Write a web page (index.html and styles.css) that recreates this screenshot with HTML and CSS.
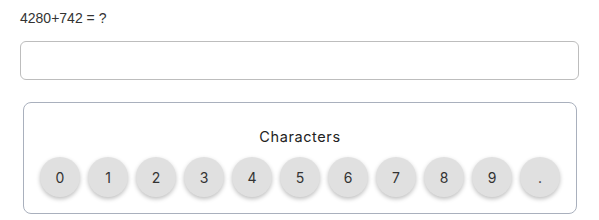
FILE: index.html
```html
<!DOCTYPE html>
<html lang="en">
<head>
    <meta charset="UTF-8">
    <meta name="viewport" content="width=device-width, initial-scale=1.0">
    <title>Calculator Captcha</title>
    <link rel="stylesheet" href="styles.css">
</head>
<body>
    <div class="container">
        <div class="question">4280+742 = ?</div>
        <input class="answer-input" type="text">

        <div class="char-panel">
            <div class="char-title">Characters</div>
            <div class="char-keys">
                <button class="char-key">0</button>
                <button class="char-key">1</button>
                <button class="char-key">2</button>
                <button class="char-key">3</button>
                <button class="char-key">4</button>
                <button class="char-key">5</button>
                <button class="char-key">6</button>
                <button class="char-key">7</button>
                <button class="char-key">8</button>
                <button class="char-key">9</button>
                <button class="char-key">.</button>
            </div>
        </div>
    </div>
</body>
</html>
```

FILE: styles.css
```css
body {
    margin: 0;
    background: #fff;
    font-family: "Liberation Sans", Arial, sans-serif;
}
.container {
    padding: 10px 20px 0 20px;
}
.question {
    font-size: 14px;
    color: #333;
    line-height: 16px;
}
.answer-input {
    display: block;
    box-sizing: border-box;
    width: 559px;
    height: 39px;
    margin-top: 15px;
    border: 1px solid #bdbdbd;
    border-radius: 6px;
    background: #fff;
}
.char-panel {
    box-sizing: border-box;
    width: 554px;
    margin: 22px 0 0 3px;
    padding: 25px 0 16px 0;
    border: 1px solid #a9b0bd;
    border-radius: 8px;
    text-align: center;
}
.char-title {
    font-family: "Inter", sans-serif;
    font-size: 14.5px;
    letter-spacing: 0.6px;
    color: #222;
    line-height: 18px;
}
.char-keys {
    display: flex;
    justify-content: center;
    gap: 8px;
    margin-top: 11px;
}
.char-key {
    width: 40px;
    height: 40px;
    border: none;
    border-radius: 50%;
    background: #e0e0e0;
    color: #333;
    font-family: "Inter", sans-serif;
    font-size: 14px;
    box-shadow: 0 2px 4px rgba(0,0,0,0.25);
    padding: 0;
}
```
